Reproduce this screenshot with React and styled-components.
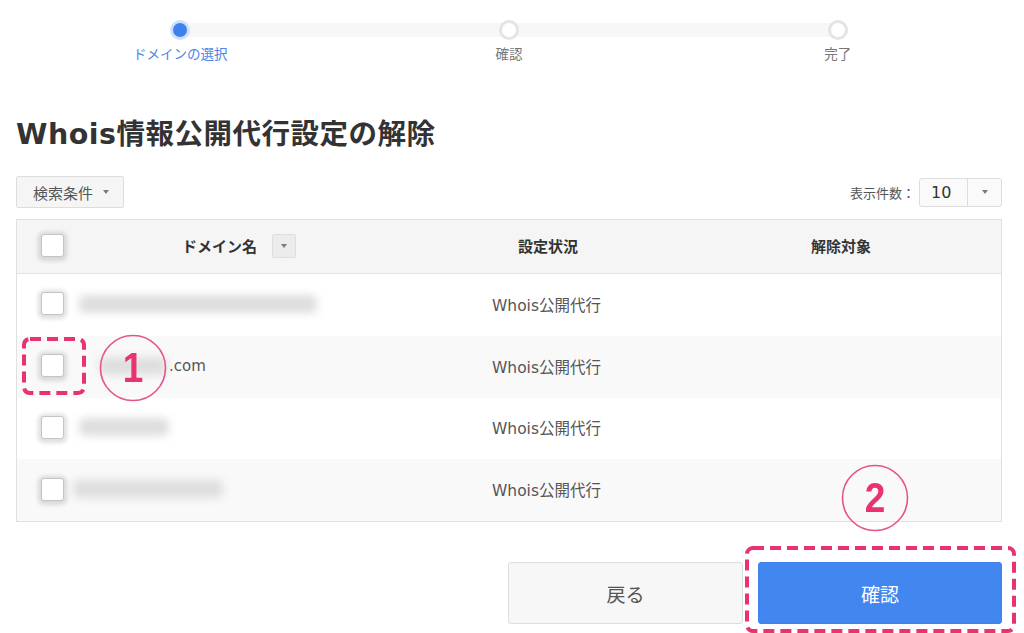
import React from 'react';
import styled, { createGlobalStyle } from 'styled-components';

const GlobalStyle = createGlobalStyle`
    html, body {
        margin: 0;
        padding: 0;
        background: #ffffff;
    }
    body {
        font-family: "Noto Sans CJK JP", "Noto Sans", sans-serif;
        color: #555555;
    }
    * {
        box-sizing: border-box;
    }
`;

const PINK = '#e8336f';

const PageWrapper = styled.div`
    position: relative;
    width: 1024px;
    height: 633px;
    overflow: hidden;
    padding: 0 22px 0 16px;
`;

const Stepper = styled.div`
    position: relative;
    display: flex;
    padding-top: 20px;
`;

const StepTrack = styled.div`
    position: absolute;
    top: 23px;
    left: 164px;
    right: 164px;
    height: 14px;
    background: #f7f7f7;
`;

const Step = styled.div`
    position: relative;
    flex: 1;
    display: flex;
    flex-direction: column;
    align-items: center;
    gap: 4px;
`;

const StepDot = styled.span`
    width: 20px;
    height: 20px;
    border-radius: 50%;
    background: ${p => (p.$active ? '#3f82ee' : '#ffffff')};
    border: 3px solid ${p => (p.$active ? '#cfe0fb' : '#e4e4e4')};
`;

const StepLabel = styled.span`
    font-size: 13.5px;
    line-height: 18px;
    color: ${p => (p.$active ? '#4a85e6' : '#777777')};
`;

const Title = styled.h1`
    margin: 55px 0 0;
    font-family: "DejaVu Sans", "Noto Sans CJK JP", sans-serif;
    font-size: 28.5px;
    line-height: 36px;
    font-weight: 700;
    color: #333333;
    letter-spacing: 0.5px;
`;

const Toolbar = styled.div`
    display: flex;
    justify-content: space-between;
    align-items: center;
    margin-top: 23px;
    height: 32px;
`;

const Caret = styled.span`
    display: inline-block;
    width: 0;
    height: 0;
    border-left: 3.5px solid transparent;
    border-right: 3.5px solid transparent;
    border-top: 4px solid #7a7a7a;
`;

const FilterButton = styled.button`
    display: flex;
    align-items: center;
    gap: 10px;
    height: 32px;
    width: 108px;
    padding: 0 0 0 16px;
    border: 1px solid #dddddd;
    border-radius: 2px;
    background: #f5f5f5;
    font-family: inherit;
    font-size: 15px;
    color: #555555;
`;

const PerPage = styled.div`
    display: flex;
    align-items: center;
    gap: 4px;
    font-size: 13px;
    color: #555555;
`;

const Select = styled.div`
    display: flex;
    width: 83px;
    height: 29px;
    border: 1px solid #dddddd;
    border-radius: 3px;
    background: #fafafa;
    font-family: "DejaVu Sans", sans-serif;
    font-size: 16px;
    color: #333333;
`;

const SelectValue = styled.span`
    flex: 1;
    display: flex;
    align-items: center;
    padding-left: 11px;
    border-right: 1px solid #dddddd;
`;

const SelectArrow = styled.span`
    width: 33px;
    display: flex;
    align-items: center;
    justify-content: center;
`;

const Table = styled.div`
    margin-top: 11px;
    border: 1px solid #e0e0e0;
`;

const Row = styled.div`
    display: grid;
    grid-template-columns: 56px 342px 266px 1fr;
    align-items: center;
    height: ${p => (p.$head ? '54px' : '61.75px')};
    padding-bottom: ${p => (p.$head ? '2px' : '2px')};
    background: ${p => (p.$head ? '#f5f5f5' : p.$alt ? '#f9f9f9' : '#ffffff')};
    border-bottom: ${p => (p.$head ? '1px solid #e4e4e4' : 'none')};
    font-size: 15px;
`;

const CheckCell = styled.div`
    padding-left: 24px;
    display: flex;
    align-items: center;
`;

const Checkbox = styled.span`
    width: 23px;
    height: 23px;
    border-radius: 3px;
    background: #ffffff;
    border: 1px solid #c4c4c4;
    box-shadow: 0 1px 4px 3px rgba(0, 0, 0, 0.13);
`;

const HeadCell = styled.div`
    display: flex;
    align-items: center;
    justify-content: center;
    gap: 15px;
    padding-right: ${p => p.$pr || 0}px;
    font-weight: 700;
    color: #333333;
`;

const SortButton = styled.span`
    width: 24px;
    height: 24px;
    display: flex;
    align-items: center;
    justify-content: center;
    border: 1px solid #dedede;
    border-radius: 2px;
    background: #ececec;
`;

const DomainCell = styled.div`
    display: flex;
    align-items: center;
    padding-left: 6px;
    font-family: "DejaVu Sans", "Noto Sans CJK JP", sans-serif;
    font-size: 15px;
    color: #555555;
`;

const Blurred = styled.span`
    display: inline-block;
    width: ${p => p.$w}px;
    margin-left: ${p => p.$ml || 0}px;
    margin-right: ${p => p.$mr || 0}px;
    height: 18px;
    border-radius: 6px;
    background: #dedede;
    filter: blur(4px);
`;

const StatusCell = styled.div`
    text-align: center;
    font-family: "DejaVu Sans", "Noto Sans CJK JP", sans-serif;
    font-size: 15.5px;
    color: #555555;
    padding-right: 3px;
`;

const Actions = styled.div`
    display: flex;
    justify-content: flex-end;
    gap: 15px;
    margin-top: 40px;
`;

const ActionButton = styled.button`
    width: ${p => (p.$primary ? '244px' : '235px')};
    height: 62px;
    border-radius: 3px;
    border: 1px solid ${p => (p.$primary ? '#3f82ee' : '#dddddd')};
    background: ${p => (p.$primary ? '#4286f0' : '#f7f7f7')};
    color: ${p => (p.$primary ? '#ffffff' : '#555555')};
    font-family: inherit;
    font-size: 19px;
`;

const Marker = styled.div`
    position: absolute;
    left: ${p => p.$x}px;
    top: ${p => p.$y}px;
    width: ${p => p.$w}px;
    height: ${p => p.$h}px;
    pointer-events: none;
`;

const MarkerNumber = styled.span`
    position: absolute;
    inset: 0;
    display: flex;
    align-items: center;
    justify-content: center;
    font-family: "Liberation Sans", sans-serif;
    font-weight: 700;
    font-size: 42px;
    color: ${PINK};
    transform: scaleX(0.88);
`;

const DashedFrame = ({ x, y, w, h }) => (
    <Marker $x={x} $y={y} $w={w} $h={h}>
        <svg width={w} height={h}>
            <rect x="2" y="2" width={w - 4} height={h - 4} rx="6" fill="none"
                stroke={PINK} strokeWidth="4" strokeDasharray="11 6" />
        </svg>
    </Marker>
);

const NumberBadge = ({ cx, cy, n }) => (
    <Marker $x={cx - 34} $y={cy - 34} $w={68} $h={68}>
        <svg width="68" height="68">
            <circle cx="34" cy="34" r="32.5" fill="none" stroke="#e5538a" strokeWidth="1.6" />
        </svg>
        <MarkerNumber>{n}</MarkerNumber>
    </Marker>
);

const rows = [
    { blur: [{ w: 238 }] },
    { blur: [{ w: 68, ml: 20, mr: 2 }], suffix: '.com' },
    { blur: [{ w: 90 }] },
    { blur: [{ w: 150, ml: -6 }] },
];

const App = () => {
    return (
        <PageWrapper>
            <GlobalStyle />
            <Stepper>
                <StepTrack />
                <Step>
                    <StepDot $active />
                    <StepLabel $active>ドメインの選択</StepLabel>
                </Step>
                <Step>
                    <StepDot />
                    <StepLabel>確認</StepLabel>
                </Step>
                <Step>
                    <StepDot />
                    <StepLabel>完了</StepLabel>
                </Step>
            </Stepper>

            <Title>Whois情報公開代行設定の解除</Title>

            <Toolbar>
                <FilterButton>検索条件<Caret /></FilterButton>
                <PerPage>
                    表示件数：
                    <Select>
                        <SelectValue>10</SelectValue>
                        <SelectArrow><Caret /></SelectArrow>
                    </Select>
                </PerPage>
            </Toolbar>

            <Table>
                <Row $head>
                    <CheckCell><Checkbox /></CheckCell>
                    <HeadCell $pr={10}>ドメイン名<SortButton><Caret /></SortButton></HeadCell>
                    <HeadCell>設定状況</HeadCell>
                    <HeadCell>解除対象</HeadCell>
                </Row>
                {rows.map((r, i) => (
                    <Row key={i} $alt={i % 2 === 1}>
                        <CheckCell><Checkbox /></CheckCell>
                        <DomainCell>
                            {r.blur.map((b, j) => <Blurred key={j} $w={b.w} $ml={b.ml} $mr={b.mr} />)}
                            {r.suffix}
                        </DomainCell>
                        <StatusCell>Whois公開代行</StatusCell>
                        <div />
                    </Row>
                ))}
            </Table>

            <Actions>
                <ActionButton>戻る</ActionButton>
                <ActionButton $primary>確認</ActionButton>
            </Actions>

            <DashedFrame x={22} y={337} w={64} h={58} />
            <NumberBadge cx={133} cy={368} n="1" />
            <NumberBadge cx={875} cy={498} n="2" />
            <DashedFrame x={745} y={546} w={271} h={87} />
        </PageWrapper>
    );
};

export default App;
